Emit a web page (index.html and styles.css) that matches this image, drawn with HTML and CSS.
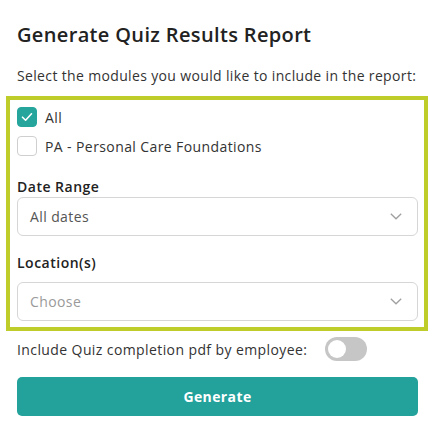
FILE: index.html
```html
<!DOCTYPE html>
<html>
<head>
<meta charset="utf-8">
<link rel="stylesheet" href="styles.css">
</head>
<body>
<div class="page">
  <h1 class="title">Generate Quiz Results Report</h1>
  <p class="subtitle">Select the modules you would like to include in the report:</p>
  <div class="box">
    <label class="check-row">
      <span class="checkbox checked">
        <svg width="14" height="14" viewBox="0 0 14 14"><path d="M2.5 7.2 L5.6 10.2 L11.5 3.8" fill="none" stroke="#fff" stroke-width="1.6" stroke-linecap="round" stroke-linejoin="round"/></svg>
      </span>
      <span class="check-text">All</span>
    </label>
    <label class="check-row second">
      <span class="checkbox"></span>
      <span class="check-text">PA - Personal Care Foundations</span>
    </label>
    <div class="field-label date-label">Date Range</div>
    <div class="select">
      <span class="select-value">All dates</span>
      <svg class="chev" width="12" height="7" viewBox="0 0 12 7"><path d="M0.8 0.8 L6 5.8 L11.2 0.8" fill="none" stroke="#a0a0a0" stroke-width="1.3"/></svg>
    </div>
    <div class="field-label loc-label">Location(s)</div>
    <div class="select">
      <span class="select-value placeholder">Choose</span>
      <svg class="chev" width="12" height="7" viewBox="0 0 12 7"><path d="M0.8 0.8 L6 5.8 L11.2 0.8" fill="none" stroke="#a0a0a0" stroke-width="1.3"/></svg>
    </div>
  </div>
  <div class="toggle-row">
    <span class="toggle-text">Include Quiz completion pdf by employee:</span>
    <span class="toggle"><span class="knob"></span></span>
  </div>
  <button class="generate">Generate</button>
</div>
</body>
</html>
```
FILE: styles.css
```css
html, body {
  margin: 0;
  padding: 0;
  background: #ffffff;
}
body {
  font-family: "Open Sans", "Noto Sans", sans-serif;
  color: #333333;
  letter-spacing: 0.4px;
}
.page {
  padding: 0 21px 0 17px;
}
.title {
  margin: 21px 0 0;
  font-size: 20px;
  line-height: 28px;
  font-weight: 600;
  letter-spacing: 0.35px;
  color: #222222;
  white-space: nowrap;
}
.subtitle {
  margin: 17px 0 0;
  font-size: 14px;
  line-height: 20px;
  letter-spacing: 0.35px;
  color: #333333;
  white-space: nowrap;
}
.box {
  margin: 10px -10px 0 -11px;
  border: 4px solid #bfcd2b;
  padding: 7px 6px 6px 7px;
}
.check-row {
  display: flex;
  align-items: center;
  height: 20px;
}
.check-row.second {
  margin-top: 9px;
}
.checkbox {
  width: 18px;
  height: 18px;
  border: 1px solid #cfcfcf;
  border-radius: 4px;
  display: flex;
  align-items: center;
  justify-content: center;
  box-sizing: content-box;
}
.checkbox.checked {
  background: #26a59c;
  border-color: #26a59c;
}
.check-text {
  margin-left: 8px;
  font-size: 14px;
  color: #333333;
}
.field-label {
  font-size: 14px;
  line-height: 20px;
  font-weight: 600;
  letter-spacing: 0.5px;
  color: #222222;
}
.date-label {
  margin-top: 21px;
}
.loc-label {
  margin-top: 17px;
  margin-bottom: 9px;
}
.select {
  height: 37px;
  border: 1px solid #d6d6d6;
  border-radius: 6px;
  display: flex;
  align-items: center;
  justify-content: space-between;
  padding: 0 15px 0 12px;
}
.select-value {
  font-size: 14px;
  color: #555555;
}
.select-value.placeholder {
  color: #9a9a9a;
}
.toggle-row {
  display: flex;
  align-items: center;
  margin-top: 6px;
  height: 24px;
}
.toggle-text {
  font-size: 14px;
  color: #333333;
  white-space: nowrap;
}
.toggle {
  margin-left: 18px;
  width: 42px;
  height: 24px;
  border-radius: 12px;
  background: #c6c6c6;
  display: flex;
  align-items: center;
  padding-left: 3px;
  box-sizing: border-box;
}
.knob {
  width: 18px;
  height: 18px;
  border-radius: 50%;
  background: #ffffff;
}
.generate {
  display: block;
  width: 100%;
  margin-top: 16px;
  height: 39px;
  border: none;
  border-radius: 5px;
  background: #23a19b;
  color: #ffffff;
  font-family: "Open Sans", "Noto Sans", sans-serif;
  font-size: 14px;
  font-weight: 700;
  letter-spacing: 0.4px;
}
```
